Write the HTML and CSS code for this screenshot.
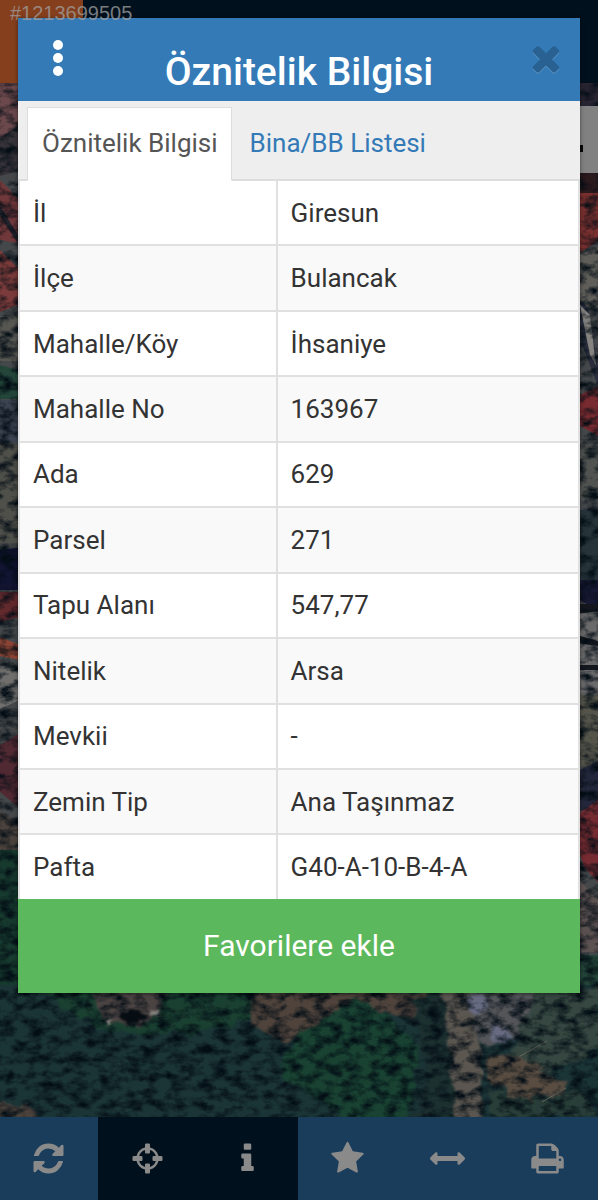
FILE: index.html
```html
<!DOCTYPE html>
<html lang="tr">
    <head>
        <meta charset="UTF-8" />
        <meta name="viewport" content="width=device-width, initial-scale=1.0" />
        <title>Öznitelik Bilgisi</title>
        <link rel="stylesheet" href="styles.css">
    </head>
    <body>
        <div class="app">
            <header class="topbar">
                <div class="topbar-logo"></div>
            </header>
            <main class="map">
                <svg class="map-image" viewBox="0 83 598 1034" preserveAspectRatio="xMidYMid slice" aria-hidden="true">
                    <defs>
                        <filter id="grain" x="0" y="0" width="100%" height="100%" color-interpolation-filters="sRGB">
                            <feTurbulence type="fractalNoise" baseFrequency="0.07 0.11" numOctaves="5" seed="8" />
                            <feColorMatrix values="0 0 0 0 0.01  0 0 0 0 0.05  0 0 0 0 0.08  2.4 0 0 0 -0.95" />
                            <feGaussianBlur stdDeviation="0.6" />
                        </filter>
                        <filter id="rough" x="-10%" y="-10%" width="120%" height="120%" color-interpolation-filters="sRGB">
                            <feTurbulence type="fractalNoise" baseFrequency="0.06" numOctaves="3" seed="3" />
                            <feDisplacementMap in="SourceGraphic" scale="16" xChannelSelector="R" yChannelSelector="G" />
                            <feGaussianBlur stdDeviation="1" />
                        </filter>
                    </defs>
                    <rect y="83" width="598" height="1034" fill="#45484a" />
                    <!-- left edge: roofs and streets -->
                    <path d="M0 83h30v55l-30 28z" fill="#6b484c" />
                    <path d="M0 138l30-20v50l-30 8z" fill="#39343b" />
                    <path d="M0 180l30 30v35l-30-5z" fill="#70383a" />
                    <path d="M0 250l30 30v20l-30 12z" fill="#7a3b3a" />
                    <path d="M0 206l30 48v8l-30-46z" fill="#25242d" />
                    <path d="M0 316h30v45h-30z" fill="#575752" />
                    <path d="M0 365l30 8v26h-30z" fill="#24463a" />
                    <path d="M0 400h30v42h-30z" fill="#3b4350" />
                    <path d="M0 445h30v98h-30z" fill="#50504a" />
                    <path d="M0 550l30-4v44h-30z" fill="#111330" />
                    <path d="M0 592h30v22l-30 8z" fill="#632a2e" />
                    <path d="M0 637l30 12v13l-30-6z" fill="#8a4434" />
                    <path d="M0 665l30 8v22l-30 14z" fill="#706f6d" />
                    <path d="M0 745l30-18v90l-30-25z" fill="#502932" />
                    <path d="M0 812l30 16v30h-30z" fill="#4b423d" />
                    <path d="M0 850h30v150h-30z" fill="#173a2e" />
                    <!-- right edge -->
                    <path d="M570 83h28v23h-28z" fill="#272330" />
                    <path d="M570 173h28v22h-28z" fill="#2a191d" />
                    <path d="M570 193h28v48l-28 18z" fill="#79302f" />
                    <path d="M570 258l28-10v60h-28z" fill="#5f5e59" />
                    <path d="M570 290l18 18 10 60v18l-28-72z" fill="#292d3c" />
                    <path d="M580 305l10 10 6 50-6-10z" fill="#85837f" />
                    <path d="M570 400l28-14v50l-28-16z" fill="#772b30" />
                    <path d="M570 440h28v60h-28z" fill="#515350" />
                    <path d="M570 510h28v75h-28z" fill="#26343a" />
                    <path d="M570 580h28v30l-28-15z" fill="#171832" />
                    <path d="M570 612h28v90h-28z" fill="#6b6a6b" />
                    <path d="M570 604h28v7l-28 4zM570 633l28 8v5l-28-4zM570 665h28v5h-28z" fill="#15171f" />
                    <path d="M570 695h28v72h-28z" fill="#54544a" />
                    <path d="M570 775l28-14v45l-28 8z" fill="#24273b" />
                    <path d="M570 820l28-20v82l-14-15z" fill="#742b31" />
                    <path d="M570 870l28 30v52h-28z" fill="#5c5151" />
                    <path d="M570 955h28v60h-28z" fill="#234438" />
                    <!-- woods below the houses -->
                    <rect y="985" width="598" height="132" fill="#1b3436" />
                    <g filter="url(#rough)">
                        <path d="M40 985h230l5 30-70 16-60 4-50-8-25-14z" fill="#1a4031" />
                        <path d="M82 985h85l-8 28-18 12-35-4z" fill="#4b4342" />
                        <path d="M252 990h180l10 35-65-14-50 10-42 24-32-20z" fill="#4f433c" />
                        <path d="M300 1030l54-30 26 10 40 40-12 70h-60l-70-45z" fill="#194232" />
                        <path d="M410 1000l32-10 10 30 10 100h-48l14-50z" fill="#1c3030" />
                        <path d="M442 985h28l10 50 2 90h-24z" fill="#5b5650" />
                        <path d="M470 985h70l-6 40-45 24-16-20z" fill="#545559" />
                        <path d="M540 985h60v60l-55 30-40-10z" fill="#354740" />
                        <path d="M488 1060l30-4 50 25-8 16-40 4-34-24z" fill="#594d42" />
                        <path d="M488 1090l60 12 30-12 25 27h-110z" fill="#293e38" />
                        <path d="M0 1104l30 4 10 12h-44z" fill="#4a413b" />
                        <path d="M124 1009h12l12 8-12 6-14-5z" fill="#070d12" />
                        <path d="M150 1009l10 3v6l-9-2zM106 1017h6l-3 9z" fill="#85827d" />
                        <path d="M465 994l18 4 5 12-15 4zM488 1024l18 4 6 12-18 3z" fill="#676a80" />
                    </g>
                    <path d="M515 1059l32-18M542 1102l24-14" stroke="#68685f" stroke-width="1" />
                    <rect y="83" width="598" height="1034" filter="url(#grain)" />
                    <rect x="560" y="106" width="38" height="67" fill="#818181" />
                    <rect x="576" y="145" width="7" height="7" fill="#050505" />
                </svg>
            </main>
            <nav class="toolbar">
                <button class="tool" aria-label="Yenile">
                    <svg viewBox="0 0 1792 1792"><path d="M1639 1056q0 5-1 7-64 268-268 434.5t-478 166.5q-146 0-282.5-55t-243.5-157l-129 129q-19 19-45 19t-45-19-19-45v-448q0-26 19-45t45-19h448q26 0 45 19t19 45-19 45l-137 137q71 66 161 102t187 36q134 0 250-65t186-179q11-17 53-117 8-23 30-23h192q13 0 22.5 9.5t9.5 22.5zm25-800v448q0 26-19 45t-45 19h-448q-26 0-45-19t-19-45 19-45l138-138q-148-137-349-137-134 0-250 65t-186 179q-11 17-53 117-8 23-30 23h-199q-13 0-22.5-9.5t-9.5-22.5v-7q65-268 270-434.5t480-166.5q146 0 284 55.5t245 156.5l130-129q19-19 45-19t45 19 19 45z" /></svg>
                </button>
                <button class="tool dark" aria-label="Konum">
                    <svg viewBox="0 0 1792 1792"><path d="M1325 1024h-109q-26 0-45-19t-19-45v-128q0-26 19-45t45-19h109q-32-108-112.5-188.5t-188.5-112.5v109q0 26-19 45t-45 19h-128q-26 0-45-19t-19-45v-109q-108 32-188.5 112.5t-112.5 188.5h109q26 0 45 19t19 45v128q0 26-19 45t-45 19h-109q32 108 112.5 188.5t188.5 112.5v-109q0-26 19-45t45-19h128q26 0 45 19t19 45v109q108-32 188.5-112.5t112.5-188.5zm339-192v128q0 26-19 45t-45 19h-143q-37 161-154.5 278.5t-278.5 154.5v143q0 26-19 45t-45 19h-128q-26 0-45-19t-19-45v-143q-161-37-278.5-154.5t-154.5-278.5h-143q-26 0-45-19t-19-45v-128q0-26 19-45t45-19h143q37-161 154.5-278.5t278.5-154.5v-143q0-26 19-45t45-19h128q26 0 45 19t19 45v143q161 37 278.5 154.5t154.5 278.5h143q26 0 45 19t19 45z" /></svg>
                </button>
                <button class="tool dark" aria-label="Bilgi">
                    <svg viewBox="0 0 1792 1792"><path d="M1216 1344v128q0 26-19 45t-45 19h-512q-26 0-45-19t-19-45v-128q0-26 19-45t45-19h64v-384h-64q-26 0-45-19t-19-45v-128q0-26 19-45t45-19h384q26 0 45 19t19 45v576h64q26 0 45 19t19 45zm-128-1152v192q0 26-19 45t-45 19h-256q-26 0-45-19t-19-45v-192q0-26 19-45t45-19h256q26 0 45 19t19 45z" /></svg>
                </button>
                <button class="tool" aria-label="Favoriler">
                    <svg viewBox="0 0 1792 1792"><path d="M1728 647q0 22-26 48l-363 354 86 500q1 7 1 20 0 21-10.5 35.5t-30.5 14.5q-19 0-40-12l-449-236-449 236q-22 12-40 12-21 0-31.5-14.5t-10.5-35.5q0-6 2-20l86-500-364-354q-25-27-25-48 0-37 56-46l502-73 225-455q19-41 49-41t49 41l225 455 502 73q56 9 56 46z" /></svg>
                </button>
                <button class="tool" aria-label="Ölçüm">
                    <svg viewBox="0 0 1792 1792"><path d="M1792 896q0 26-19 45l-256 256q-19 19-45 19t-45-19-19-45v-128h-1024v128q0 26-19 45t-45 19-45-19l-256-256q-19-19-19-45t19-45l256-256q19-19 45-19t45 19 19 45v128h1024v-128q0-26 19-45t45-19 45 19l256 256q19 19 19 45z" /></svg>
                </button>
                <button class="tool" aria-label="Yazdır">
                    <svg viewBox="0 0 1792 1792"><path d="M448 1536h896v-256h-896v256zm0-640h896v-384h-160q-40 0-68-28t-28-68v-160h-640v640zm1152 64q0-26-19-45t-45-19-45 19-19 45 19 45 45 19 45-19 19-45zm128 0v416q0 13-9.5 22.5t-22.5 9.5h-224v160q0 40-28 68t-68 28h-960q-40 0-68-28t-28-68v-160h-224q-13 0-22.5-9.5t-9.5-22.5v-416q0-79 56.5-135.5t135.5-56.5h64v-544q0-40 28-68t68-28h672q40 0 88 20t76 48l152 152q28 28 48 76t20 88v256h64q79 0 135.5 56.5t56.5 135.5z" /></svg>
                </button>
            </nav>

            <section class="modal" role="dialog" aria-labelledby="modal-title">
                <div class="modal-header">
                    <button class="icon-btn" aria-label="Menü">
                        <svg viewBox="0 0 40 40"><circle cx="20" cy="7" r="5" /><circle cx="20" cy="20" r="5" /><circle cx="20" cy="33" r="5" /></svg>
                    </button>
                    <h1 id="modal-title">Öznitelik Bilgisi</h1>
                    <button class="icon-btn close" aria-label="Kapat">
                        <svg viewBox="0 0 1792 1792"><path d="M1490 1322q0 40-28 68l-136 136q-28 28-68 28t-68-28l-294-294-294 294q-28 28-68 28t-68-28l-136-136q-28-28-28-68t28-68l294-294-294-294q-28-28-28-68t28-68l136-136q28-28 68-28t68 28l294 294 294-294q28-28 68-28t68 28l136 136q28 28 28 68t-28 68l-294 294 294 294q28 28 28 68z" /></svg>
                    </button>
                </div>
                <div class="tabs" role="tablist">
                    <button class="tab active" role="tab" aria-selected="true">Öznitelik Bilgisi</button>
                    <button class="tab" role="tab" aria-selected="false">Bina/BB Listesi</button>
                </div>
                <table class="info">
                    <tbody>
                        <tr><th scope="row">İl</th><td>Giresun</td></tr>
                        <tr><th scope="row">İlçe</th><td>Bulancak</td></tr>
                        <tr><th scope="row">Mahalle/Köy</th><td>İhsaniye</td></tr>
                        <tr><th scope="row">Mahalle No</th><td>163967</td></tr>
                        <tr><th scope="row">Ada</th><td>629</td></tr>
                        <tr><th scope="row">Parsel</th><td>271</td></tr>
                        <tr><th scope="row">Tapu Alanı</th><td>547,77</td></tr>
                        <tr><th scope="row">Nitelik</th><td>Arsa</td></tr>
                        <tr><th scope="row">Mevkii</th><td>-</td></tr>
                        <tr><th scope="row">Zemin Tip</th><td>Ana Taşınmaz</td></tr>
                        <tr><th scope="row">Pafta</th><td>G40-A-10-B-4-A</td></tr>
                    </tbody>
                </table>
                <button class="favorite">Favorilere ekle</button>
            </section>
            <span class="stamp">#1213699505</span>
        </div>
    </body>
</html>
```
FILE: styles.css
```css
* {
    box-sizing: border-box;
}
body {
    margin: 0;
    font-family: Roboto, "Liberation Sans", sans-serif;
    font-size: 26px;
    color: #333;
    background: #00101d;
}
button {
    margin: 0;
    border: none;
    font-family: inherit;
    cursor: pointer;
}
.app {
    position: relative;
    display: flex;
    flex-direction: column;
    min-height: 100vh;
}

/* darkened page behind the dialog */
.topbar {
    display: flex;
    height: 83px;
    background: #00101d;
}
.topbar-logo {
    width: 83px;
    background: #863f1c;
}
.map {
    position: relative;
    flex: 1;
    overflow: hidden;
}
.map-image {
    position: absolute;
    width: 100%;
    height: 100%;
}
.toolbar {
    display: grid;
    grid-template-columns: 98px repeat(5, 1fr);
    height: 83px;
}
.tool {
    display: flex;
    align-items: center;
    justify-content: center;
    padding: 0 2px 0 0;
    background: #1a3d5c;
}
.tool.dark {
    background: #00101d;
}
.tool svg {
    width: 35px;
    height: 35px;
    fill: #8a8a8a;
}

/* dialog */
.modal {
    position: absolute;
    top: 18px;
    left: 18px;
    right: 18px;
    background: #fff;
    box-shadow: 0 1px 4px rgba(0, 0, 0, 0.5);
}
.modal-header {
    display: flex;
    align-items: flex-start;
    justify-content: space-between;
    height: 83px;
    padding: 20px 14px 0;
    background: #337ab7;
}
.modal-header h1 {
    margin: 0;
    padding-top: 11px;
    font-size: 39px;
    font-weight: 500;
    line-height: 46px;
    color: #fff;
}
.icon-btn {
    padding: 0 0 0 6px;
    background: none;
}
.icon-btn svg {
    display: block;
    width: 40px;
    height: 40px;
    fill: #fff;
}
.icon-btn.close svg {
    fill: #296292;
    filter: drop-shadow(0 1px 0 #5c95c5);
}
.tabs {
    display: flex;
    gap: 3px;
    padding: 6px 9px 0;
    background: #eee;
    border-bottom: 2px solid #ddd;
}
.tab {
    margin-bottom: -2px;
    padding: 20px 13px 22px 14px;
    border: 1px solid transparent;
    font-size: 26px;
    line-height: 30px;
    color: #337ab7;
    background: none;
}
.tab.active {
    color: #555;
    background: #fff;
    border-color: #ddd;
    border-bottom-color: #fff;
}
.info {
    width: 100%;
    height: calc(60vh - 2px);
    border-collapse: collapse;
    table-layout: fixed;
}
.info th,
.info td {
    padding: 12px 13px;
    border: 2px solid #e0e0e0;
    font-weight: 400;
    line-height: 36px;
    text-align: left;
}
.info tr:first-child > * {
    border-top: none;
}
.info tr:last-child > * {
    border-bottom: none;
}
.info th {
    width: 46%;
}
.info tr:nth-child(2n) {
    background: #f9f9f9;
}
.favorite {
    display: block;
    width: 100%;
    padding: 28px 20px;
    font-size: 30px;
    line-height: 38px;
    color: #fff;
    background: #5cb85c;
}

.stamp {
    position: absolute;
    top: 2px;
    left: 10px;
    font-family: "Liberation Sans", Arial, sans-serif;
    font-size: 20px;
    line-height: 22px;
    color: rgba(160, 160, 160, 0.75);
}
```
